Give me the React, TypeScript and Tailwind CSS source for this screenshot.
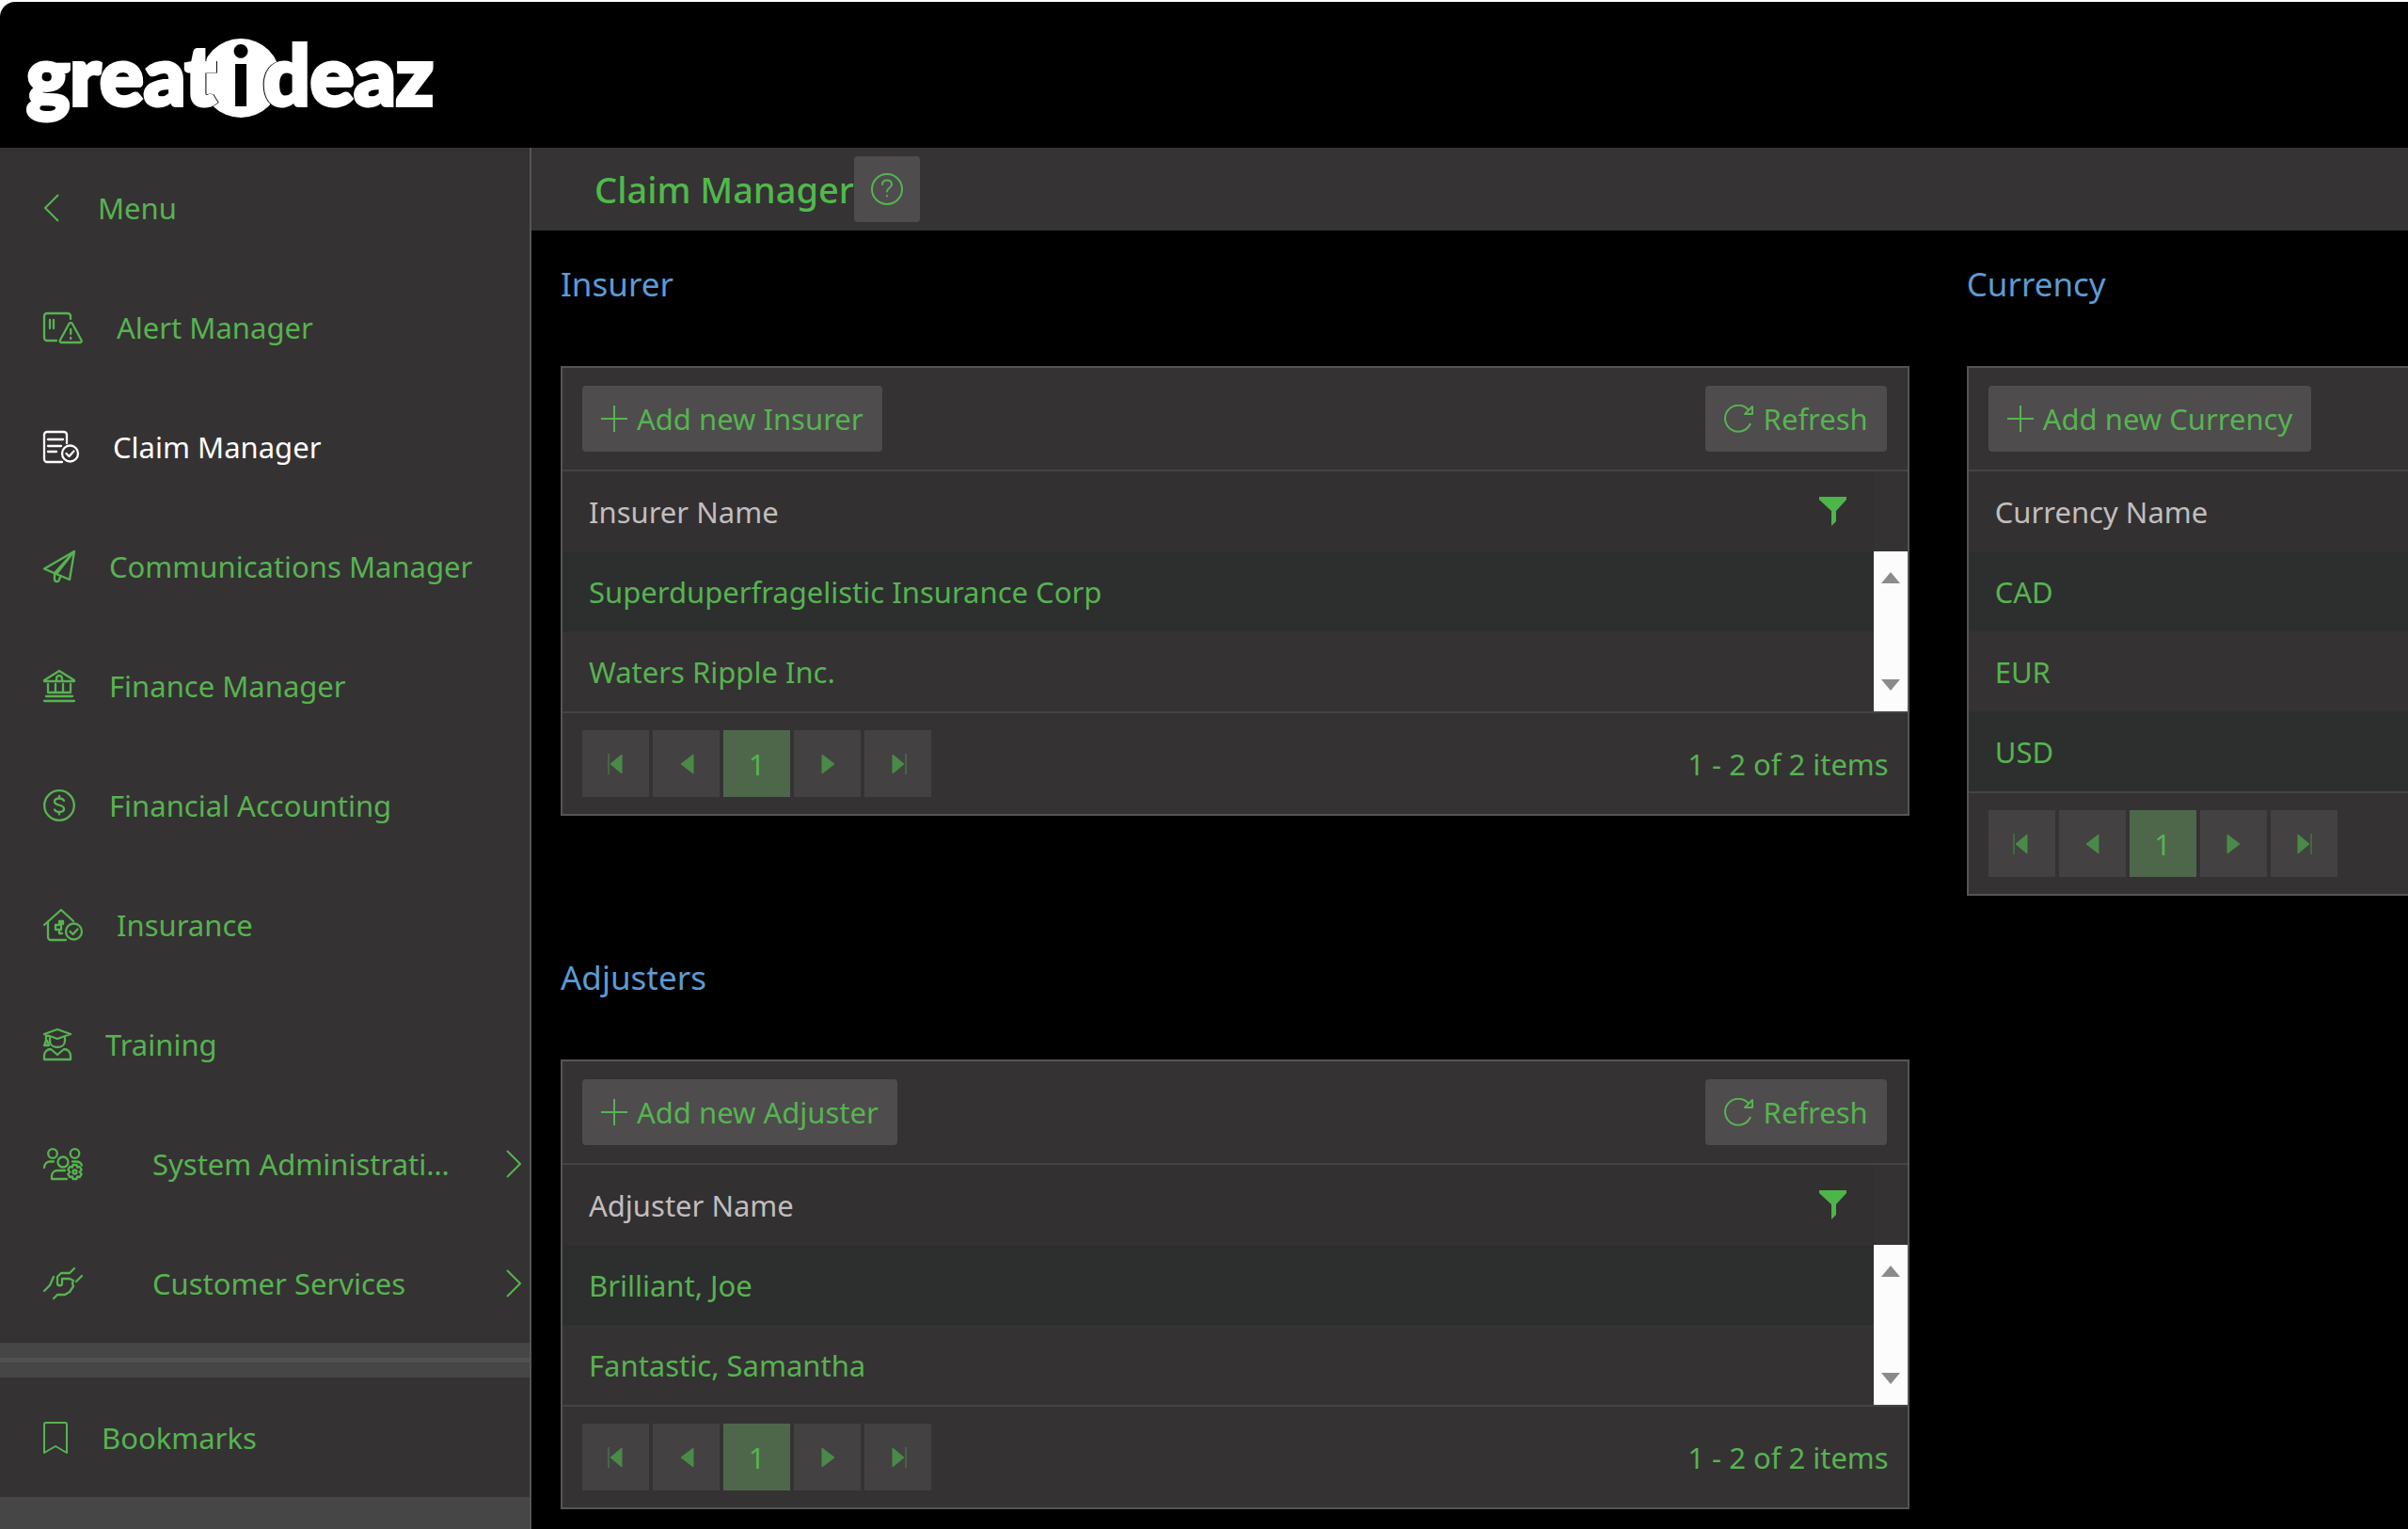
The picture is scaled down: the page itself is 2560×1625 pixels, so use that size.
import type { ReactNode } from "react";

const NAV_ITEMS = [
  { label: "Alert Manager", icon: "alert" },
  { label: "Claim Manager", icon: "claim", active: true },
  { label: "Communications Manager", icon: "send" },
  { label: "Finance Manager", icon: "bank" },
  { label: "Financial Accounting", icon: "dollar" },
  { label: "Insurance", icon: "insurance" },
  { label: "Training", icon: "training" },
  { label: "System Administration", icon: "admin", children: true },
  { label: "Customer Services", icon: "services", children: true },
];

const ICONS: Record<string, { w: number; body: ReactNode }> = {
  alert: {
    w: 42,
    body: (
      <>
        <path d="M14 31H4a3 3 0 0 1-3-3V5a3 3 0 0 1 3-3h22a3 3 0 0 1 3 3v3" />
        <path d="M7 9v9M11 9v9" />
        <path d="M27.500 13a2 2 0 0 1 3.400 0L40.500 30.500a1.600 1.600 0 0 1-1.400 2.500H19.300a1.600 1.600 0 0 1-1.400-2.500Z" />
        <path d="M29.200 19v5M29.200 28v1" />
      </>
    ),
  },
  claim: {
    w: 38,
    body: (
      <>
        <path d="M20 33H4a3 3 0 0 1-3-3V4a3 3 0 0 1 3-3h18a3 3 0 0 1 3 3v9" />
        <path d="M5 9h16M5 16h14M5 22h9" />
        <circle cx="28.500" cy="24" r="8.500" />
        <path d="m24.500 24 3 3 5-5.500" />
      </>
    ),
  },
  send: {
    w: 34,
    body: (
      <>
        <path d="M33 1 1 19.500 11.500 24 28 31Z" />
        <path d="M32 2 12 24v6a2.500 2.500 0 0 0 4.500 2L18.500 27M32 2 14 25" />
      </>
    ),
  },
  bank: {
    w: 34,
    body: (
      <>
        <path d="M1 11 17 1l16 10v1H1Z" />
        <path d="M14 11V9a3 3 0 0 1 6 0v2" />
        <path d="M5 15v9h24v-9M13 15v9M21 15v9M3 28h28M1 33h32" />
      </>
    ),
  },
  dollar: {
    w: 34,
    body: (
      <>
        <circle cx="17" cy="17" r="15.800" />
        <path d="M22 12c-1-2-3-2.500-5-2.500-3 0-5 1.300-5 3.500 0 5 10 2.500 10 7.500 0 2.300-2 3.500-5 3.500-2 0-4-.500-5-2.500M17 7v2.500M17 24v2.500" />
      </>
    ),
  },
  insurance: {
    w: 42,
    body: (
      <>
        <path d="M1 17 19 1l13 12M5 14v16a3 3 0 0 0 3 3h16" />
        <path d="M21 16v-3h-4v4h-4v5h4v4h3M19 13v9" />
        <circle cx="32.500" cy="24" r="8.500" />
        <path d="m28.500 24 3 3 5-5.500" />
      </>
    ),
  },
  training: {
    w: 30,
    body: (
      <>
        <path d="M1 6 15 1l14 5-14 5ZM3 7v6l-2 5h5l-2-5" />
        <path d="M7 10v3c0 4 3 7 8 7s8-3 8-7v-3" />
        <path d="M1 33v-4c0-4 3-7 7-7l7 6 7-6c4 0 7 3 7 7v4Z" />
      </>
    ),
  },
  admin: {
    w: 42,
    body: (
      <>
        <circle cx="10" cy="6" r="4.800" />
        <circle cx="33.500" cy="6" r="4.800" />
        <circle cx="21" cy="15" r="5.500" />
        <path d="M1 21c0-4 3-6.500 6-6.500h4M31 14.500h4c3 0 5 1 6 4M25 33H9v-3c0-4 3-6 6-6h8" />
        <circle cx="33.500" cy="25.500" r="2" />
        <path d="M31.500 18h4l.6 2.600 2.600-.800 2 3.500-2 2.200 2 2.200-2 3.500-2.600-.800-.6 2.600h-4l-.6-2.600-2.600.800-2-3.500 2-2.200-2-2.200 2-3.500 2.600.800Z" />
      </>
    ),
  },
  services: {
    w: 42,
    body: (
      <>
        <path d="M1 25 7 19l4-9M41 9l-6 6" />
        <path d="M33 1l-5 5h-9l-4 4v7c0 3 5 3 5 0v-5h8l4 2-1 3 1 3-4 6-5 3h-8l-4 4" />
      </>
    ),
  },
};

const PAGER = [
  { label: "First page", d: "M2 2v22M16 3v20L4 13Z" },
  { label: "Previous page", d: "M17 3v20L4 13Z" },
  { label: "Page 1", d: "" },
  { label: "Next page", d: "M4 3v20l13-10Z" },
  { label: "Last page", d: "M18 2v22M4 3v20l12-10Z" },
];

function Icon({ name }: { name: string }) {
  const { w, body } = ICONS[name];
  return (
    <svg
      width={w}
      height={34}
      viewBox={`0 0 ${w} 34`}
      fill="none"
      stroke="currentColor"
      strokeWidth={2.3}
      strokeLinecap="round"
      strokeLinejoin="round"
      className="shrink-0 overflow-visible"
      aria-hidden="true"
    >
      {body}
    </svg>
  );
}

function Logo() {
  return (
    <svg
      width={440}
      height={116}
      viewBox="0 0 440 116"
      className="overflow-visible font-[Lato,sans-serif] font-black"
      fontSize={87}
      fill="#fff"
      role="img"
      aria-label="greatideaz"
    >
      <circle cx="228" cy="61" r="42" />
      {/* words are thickened by a white stroke, then edged in black where they cross the disc */}
      <g stroke="#fff" strokeWidth={4} className="[filter:drop-shadow(1px_0_0_#000)_drop-shadow(-1px_0_0_#000)]">
        <text x="0" y="90">great</text>
        <text x="252" y="90">deaz</text>
      </g>
      <text x="228" y="91" textAnchor="middle" fill="#000">i</text>
    </svg>
  );
}

function Sidebar() {
  return (
    <nav className="flex w-[565px] shrink-0 flex-col border-r-2 border-[#555] bg-[#464646]">
      <div className="bg-[#353233]">
        <button type="button" className="flex h-[127px] w-full items-center gap-[38px] pl-[46px]">
          <svg width={20} height={30} viewBox="0 0 20 30" fill="none" stroke="currentColor" strokeWidth={2} aria-hidden="true">
            <path d="M16 1 2 15l14 14" />
          </svg>
          Menu
        </button>
        {NAV_ITEMS.map((item) => (
          <a
            key={item.label}
            href="#"
            className={`flex h-[127px] items-center pr-2 pl-[46px] ${item.active ? "text-white" : ""}`}
          >
            <Icon name={item.icon} />
            <span className={item.children ? "ml-[74px] w-[324px] shrink-0 truncate" : "ml-9"}>{item.label}</span>
            {item.children && (
              <svg width={18} height={30} viewBox="0 0 18 30" fill="none" stroke="currentColor" strokeWidth={2} className="ml-auto shrink-0" aria-hidden="true">
                <path d="m2 1 14 14L2 29" />
              </svg>
            )}
          </a>
        ))}
      </div>
      <hr className="my-4 h-[5px] border-0 bg-[#505050]" />
      <a href="#" className="flex h-[127px] items-center gap-9 bg-[#353233] pl-[46px]">
        <svg width={26} height={34} viewBox="0 0 26 34" fill="none" stroke="currentColor" strokeWidth={2} strokeLinejoin="round" aria-hidden="true">
          <path d="M1 33V3a2 2 0 0 1 2-2h20a2 2 0 0 1 2 2v30l-12-7Z" />
        </svg>
        Bookmarks
      </a>
    </nav>
  );
}

function Panel({ title, item, rows }: { title: string; item: string; rows: string[] }) {
  return (
    <section>
      <h2 className="text-[35px] leading-[48px] text-[#5b9bd5]">{title}</h2>
      <div className="mt-[63px] border-2 border-[#555] bg-[#353233]">
        <div className="flex items-center justify-between border-b-2 border-[#444] py-[19px] pr-[22px] pl-[21px]">
          <button type="button" className="flex h-[70px] items-center gap-[10px] rounded-sm bg-[#4e4c4d] px-5">
            <svg width={28} height={28} viewBox="0 0 28 28" stroke="currentColor" strokeWidth={2} aria-hidden="true">
              <path d="M14 0v28M0 14h28" />
            </svg>
            Add new {item}
          </button>
          <button type="button" className="flex h-[70px] items-center gap-[10px] rounded-sm bg-[#4e4c4d] px-5">
            <svg width={32} height={30} viewBox="0 0 32 30" fill="none" stroke="currentColor" strokeWidth={2} strokeLinejoin="round" aria-hidden="true">
              <path d="M28 20A14 14 0 1 1 26 6M30 2v8h-8Z" />
            </svg>
            Refresh
          </button>
        </div>
        <div className="flex">
          <table className="grow">
            <thead>
              <tr className="h-[85px] bg-[#333031] text-[#c0bebe]">
                <th scope="col" className="px-7 text-left font-normal">
                  <div className="flex items-center justify-between">
                    {item} Name
                    <button type="button" aria-label={`Filter ${item} Name`} className="text-[#4cb648]">
                      <svg width={30} height={32} viewBox="0 0 30 32" fill="currentColor" aria-hidden="true">
                        <path d="M0 0h29v3L18 15v11l-5 5V15L0 3Z" />
                      </svg>
                    </button>
                  </div>
                </th>
              </tr>
            </thead>
            <tbody>
              {rows.map((row) => (
                <tr key={row} className="h-[85px] odd:bg-[#2c2f2e]">
                  <td className="px-7">{row}</td>
                </tr>
              ))}
            </tbody>
          </table>
          <div className="flex w-9 flex-col">
            <div className="h-[85px]" />
            <div className="flex grow flex-col items-center justify-between bg-[#fcfcfc] py-[22px]">
              <svg width={20} height={12} viewBox="0 0 20 12" fill="#8b8b8b" aria-hidden="true">
                <path d="M10 0 20 12H0Z" />
              </svg>
              <svg width={20} height={12} viewBox="0 0 20 12" fill="#8b8b8b" aria-hidden="true">
                <path d="M0 0h20L10 12Z" />
              </svg>
            </div>
          </div>
        </div>
        <div className="flex items-center justify-between border-t-2 border-[#444] py-[18px] pr-5 pl-[21px]">
          <div className="flex gap-1">
            {PAGER.map((p) => (
              <button
                key={p.label}
                type="button"
                aria-label={p.label}
                className={`flex h-[71px] w-[71px] items-center justify-center ${p.d ? "bg-[#434142] text-[#4a8a48]" : "bg-[#4e674b]"}`}
              >
                {p.d ? (
                  <svg width={20} height={26} viewBox="0 0 20 26" fill="currentColor" stroke="currentColor" aria-hidden="true">
                    <path d={p.d} />
                  </svg>
                ) : (
                  "1"
                )}
              </button>
            ))}
          </div>
          <span>
            1 - {rows.length} of {rows.length} items
          </span>
        </div>
      </div>
    </section>
  );
}

export default function App() {
  return (
    <div className="flex min-h-screen flex-col bg-white pt-[2px] font-['Noto_Sans',sans-serif] text-[31px] leading-[44px] text-[#57b351]">
      <header className="flex h-[155px] shrink-0 items-center rounded-tl-2xl bg-black pl-7">
        <Logo />
      </header>
      <div className="flex grow bg-black">
        <Sidebar />
        <main className="min-w-0 grow overflow-hidden">
          <div className="flex h-[88px] items-center bg-[#353334] pl-[67px]">
            <h1 className="text-[38px] font-medium text-[#50b94a]">Claim Manager</h1>
            <button type="button" aria-label="Help" className="flex h-[70px] w-[70px] items-center justify-center rounded-sm bg-[#4e4c4d]">
              <svg width={34} height={34} viewBox="0 0 34 34" fill="none" stroke="currentColor" strokeWidth={2} strokeLinecap="round" aria-hidden="true">
                <circle cx="17" cy="17" r="16" />
                <path d="M12 12c0-6 10-6 10 0 0 4-5 3.500-5 7.500M17 24v.500" />
              </svg>
            </button>
          </div>
          <div className="grid grid-cols-[73%_73%] items-start gap-x-[61px] pt-[33px] pl-[31px]">
            <div className="flex flex-col gap-[148px]">
              <Panel title="Insurer" item="Insurer" rows={["Superduperfragelistic Insurance Corp", "Waters Ripple Inc."]} />
              <Panel title="Adjusters" item="Adjuster" rows={["Brilliant, Joe", "Fantastic, Samantha"]} />
            </div>
            <Panel title="Currency" item="Currency" rows={["CAD", "EUR", "USD"]} />
          </div>
        </main>
      </div>
    </div>
  );
}
